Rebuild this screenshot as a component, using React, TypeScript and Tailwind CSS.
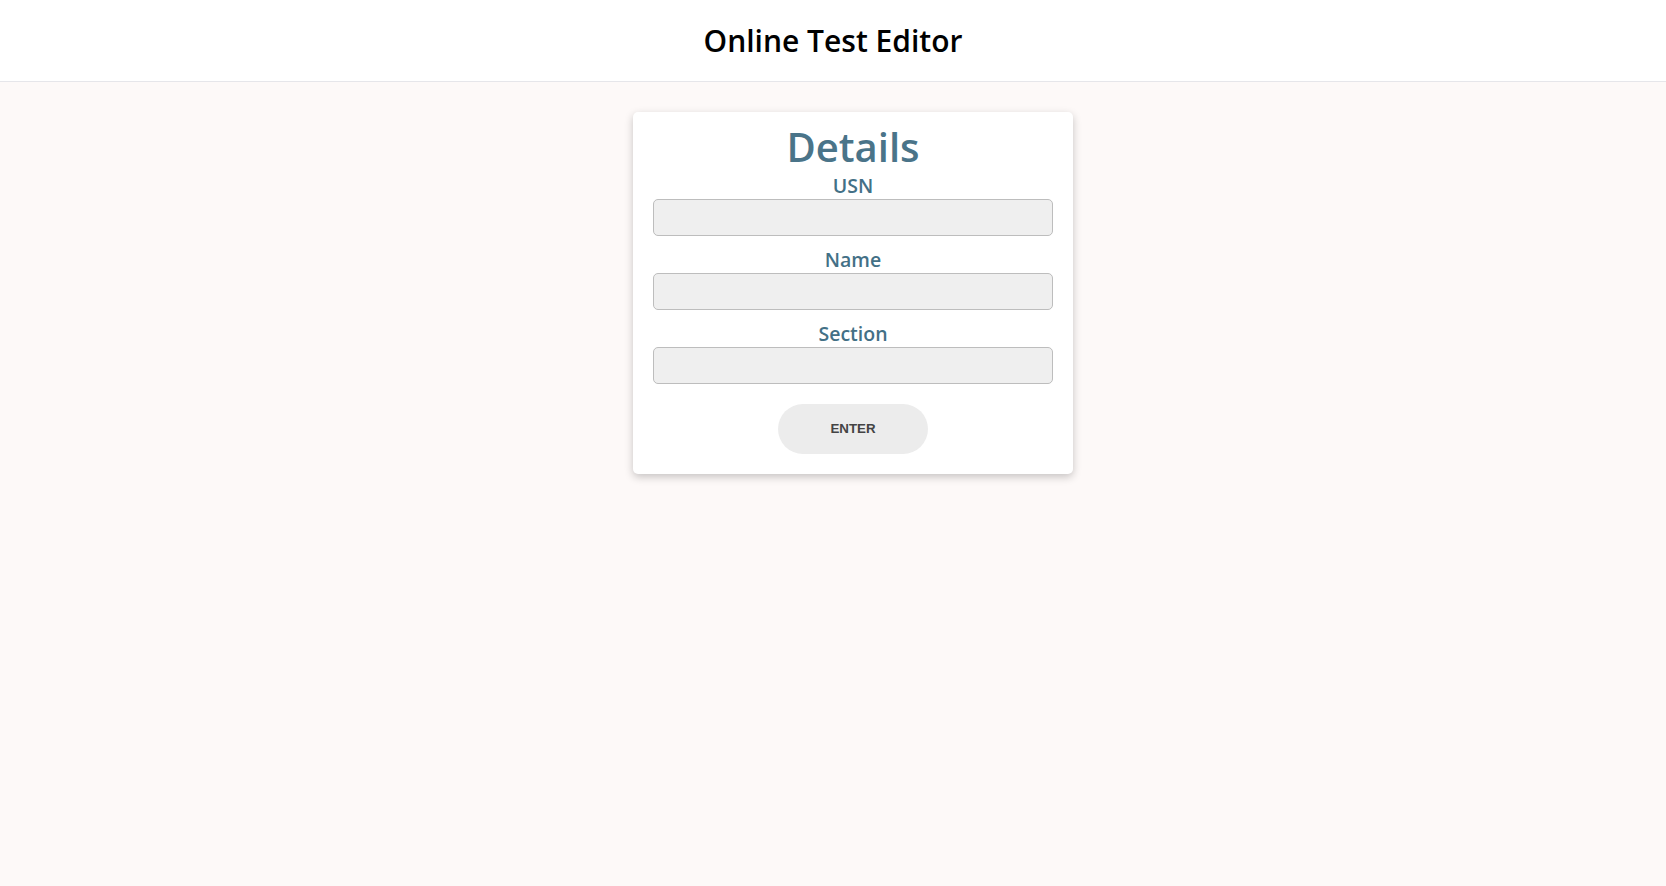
import React from "react";

export default function App() {
  const labelCls =
    "block text-center text-[19.5px] leading-[24px] font-semibold text-[#437086]";
  const inputCls =
    "block w-full h-[37px] rounded-[5px] border border-[#bdbdbd] bg-[#efefef] outline-none px-2";
  return (
    <div
      className="min-h-[886px] w-full bg-[#fdf9f8]"
      style={{ fontFamily: '"Open Sans", "Noto Sans", sans-serif' }}
    >
      <header className="bg-white border-b border-[#e6e6ea] pt-[19px] pb-[18px]">
        <h1 className="text-center text-[30px] leading-[44px] font-semibold text-black">
          Online Test Editor
        </h1>
      </header>
      <main className="flex justify-center pl-[40px] pt-[30px]">
        <div className="w-[440px] bg-white rounded-[5px] shadow-[0_3px_8px_rgba(0,0,0,0.22)] px-[20px] pt-[10px] pb-[20px]">
          <h2 className="text-center text-[40px] leading-[50px] font-semibold text-[#4a7489]">
            Details
          </h2>
          <label className={labelCls + " mt-[2px]"}>USN</label>
          <input className={inputCls + " mt-[1px]"} />
          <label className={labelCls + " mt-[12px]"}>Name</label>
          <input className={inputCls + " mt-[1px]"} />
          <label className={labelCls + " mt-[12px]"}>Section</label>
          <input className={inputCls + " mt-[1px]"} />
          <div className="flex justify-center mt-[20px]">
            <button
              className="w-[150px] h-[50px] rounded-full bg-[#ececec] text-[#444] text-[13.33px] font-bold"
              style={{ fontFamily: '"Liberation Sans", Arial, sans-serif' }}
            >
              ENTER
            </button>
          </div>
        </div>
      </main>
    </div>
  );
}
